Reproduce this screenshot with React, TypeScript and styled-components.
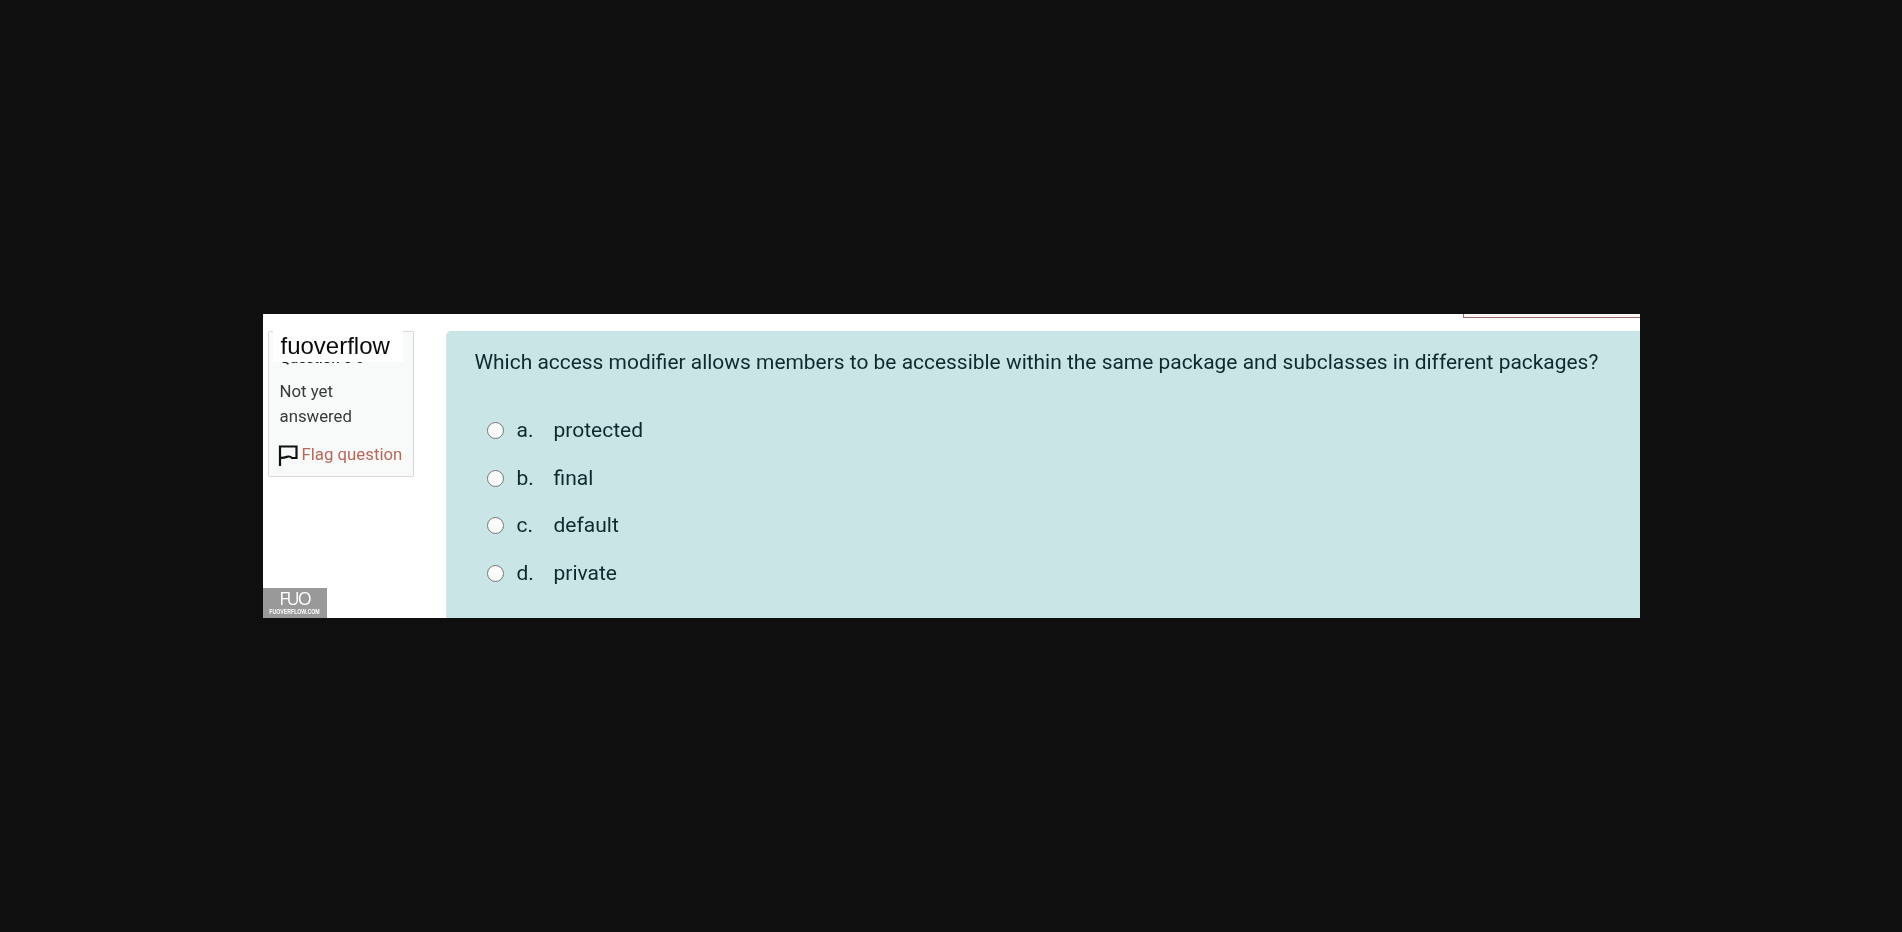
import React from 'react';
import styled, { createGlobalStyle } from 'styled-components';

const GlobalStyle = createGlobalStyle`
  html, body {
    margin: 0;
    padding: 0;
    height: 100%;
    background: #0f0f0f;
  }
  #root {
    height: 100%;
  }
`;

const Page = styled.div`
  height: 932px;
  display: flex;
  align-items: center;
  justify-content: center;
  background: #0f0f0f;
  font-family: Roboto, "Liberation Sans", sans-serif;
  overflow: hidden;
`;

const Frame = styled.div`
  position: relative;
  width: 1377px;
  height: 304px;
  background: #fff;
  overflow: hidden;
  filter: blur(0.35px);
`;

const TopRow = styled.div`
  display: flex;
  justify-content: flex-end;
  height: 17px;
`;

const CutButton = styled.div`
  width: 176px;
  height: 3px;
  background: #fff6f3;
  border-left: 1px solid #a56a6a;
  border-bottom: 1px solid #a56a6a;
`;

const Body = styled.div`
  display: flex;
  align-items: flex-start;
  padding-left: 5px;
`;

const InfoPanel = styled.div`
  position: relative;
  flex: none;
  box-sizing: border-box;
  width: 146px;
  height: 146px;
  padding: 16px 8px 0 11px;
  background: #f8f9f9;
  border: 1px solid #d9d9d9;
  border-radius: 2px;
  color: #373a3c;
`;

const PanelTitle = styled.h3`
  margin: 0 0 11px;
  font-size: 15px;
  line-height: 20px;
  font-weight: 500;
  color: #1d2125;
`;

const State = styled.div`
  font-size: 16.8px;
  line-height: 24.5px;
`;

const FlagLink = styled.a`
  display: flex;
  align-items: center;
  gap: 4px;
  margin: 13px 0 0 -2px;
  font-size: 16.8px;
  line-height: 24px;
  color: #b9675a;
  white-space: nowrap;
`;

const BrandLabel = styled.div`
  position: absolute;
  top: -1px;
  left: 4px;
  width: 130px;
  height: 31px;
  padding-left: 8px;
  box-sizing: border-box;
  background: #fff;
  color: #0a0a0a;
  font-family: "Liberation Sans", Arial, sans-serif;
  font-size: 24px;
  line-height: 29px;
`;

const QuestionPanel = styled.div`
  flex: 1;
  margin-left: 32px;
  height: 287px;
  box-sizing: border-box;
  padding: 16px 0 0 28px;
  background: #cae5e6;
  border-left: 1px solid #dbe4e4;
  border-top-left-radius: 5px;
  color: #0f2a2e;
`;

const QuestionText = styled.div`
  font-size: 20.95px;
  line-height: 30px;
  white-space: nowrap;
`;

const Options = styled.div`
  display: flex;
  flex-direction: column;
  margin-top: 29px;
  padding-left: 12px;
`;

const Option = styled.label`
  display: flex;
  align-items: center;
  height: 47.7px;
  font-size: 21px;
`;

const Radio = styled.span`
  flex: none;
  box-sizing: border-box;
  width: 17px;
  height: 17px;
  margin-top: 1px;
  border-radius: 50%;
  background: #fbfdfd;
  border: 1.7px solid #767676;
`;

const OptionLetter = styled.span`
  width: 37px;
  margin-left: 13px;
`;

const Watermark = styled.div`
  position: absolute;
  left: 0;
  bottom: 0;
  width: 64px;
  height: 30px;
  display: flex;
  flex-direction: column;
  align-items: center;
  background: #999;
  color: #fff;
`;

const WatermarkLogo = styled.div`
  font-family: "Open Sans", sans-serif;
  font-size: 18px;
  font-weight: 400;
  line-height: 20px;
  letter-spacing: -2px;
`;

const WatermarkUrl = styled.div`
  font-family: "Liberation Sans", Arial, sans-serif;
  font-size: 6.5px;
  font-weight: 700;
  line-height: 8px;
  white-space: nowrap;
  transform: scaleX(0.8);
`;

const FlagIcon = () => (
  <svg width="20" height="22" viewBox="0 0 20 22" fill="none" stroke="#111" strokeWidth="2.2" style={{ flex: 'none', marginTop: 3 }}>
    <path d="M2 22V2.500h16.500V14h-4.500c-1.500-1.700-3-1.900-5.200-1.100-2.200 .8-4 1-6.800 .9" />
  </svg>
);

const options = [
  { letter: 'a.', text: 'protected' },
  { letter: 'b.', text: 'final' },
  { letter: 'c.', text: 'default' },
  { letter: 'd.', text: 'private' },
];

const App = () => {
  return (
    <Page>
      <GlobalStyle />
      <Frame>
        <TopRow>
          <CutButton />
        </TopRow>
        <Body>
          <InfoPanel>
            <BrandLabel>fuoverflow</BrandLabel>
            <PanelTitle>Question 6 0</PanelTitle>
            <State>Not yet<br />answered</State>
            <FlagLink>
              <FlagIcon />
              Flag question
            </FlagLink>
          </InfoPanel>
          <QuestionPanel>
            <QuestionText>
              Which access modifier allows members to be accessible within the same package and subclasses in different packages?
            </QuestionText>
            <Options>
              {options.map(option => (
                <Option key={option.letter}>
                  <Radio />
                  <OptionLetter>{option.letter}</OptionLetter>
                  {option.text}
                </Option>
              ))}
            </Options>
          </QuestionPanel>
        </Body>
        <Watermark>
          <WatermarkLogo>FUO</WatermarkLogo>
          <WatermarkUrl>FUOVERFLOW.COM</WatermarkUrl>
        </Watermark>
      </Frame>
    </Page>
  );
};

export default App;
